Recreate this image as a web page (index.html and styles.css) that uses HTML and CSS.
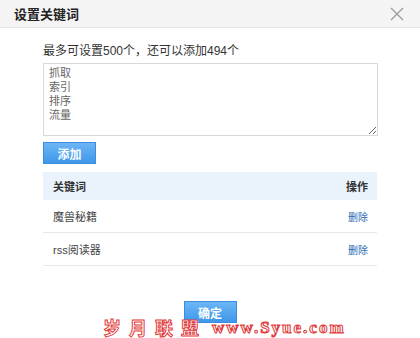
FILE: index.html
```html
<!DOCTYPE html>
<html>
<head>
<meta charset="utf-8">
<link rel="stylesheet" href="styles.css">
</head>
<body>
<div class="dialog">
  <div class="header">
    <span class="title">设置关键词</span>
    <svg class="close" width="14" height="14" viewBox="0 0 14 14"><path d="M1 1L13 13M13 1L1 13" stroke="#9a9a9a" stroke-width="1.3" fill="none"/></svg>
  </div>
  <div class="body">
    <div class="hint">最多可设置500个，还可以添加494个</div>
    <textarea class="kw">抓取
索引
排序
流量</textarea>
    <button class="btn add">添加</button>
    <div class="table">
      <div class="row head"><span>关键词</span><span>操作</span></div>
      <div class="row"><span>魔兽秘籍</span><a class="del">删除</a></div>
      <div class="row"><span>rss阅读器</span><a class="del">删除</a></div>
    </div>
  </div>
  <div class="footer">
    <button class="btn ok">确定</button>
  </div>
  <div class="watermark"><span class="wm-cn">岁月联盟</span><span class="wm-en">www.Syue.com</span></div>
</div>
</body>
</html>
```

FILE: styles.css
```css
* { box-sizing: border-box; }
html, body { margin: 0; padding: 0; background: #fff; }
body { font-family: "Liberation Sans", "Noto Sans CJK SC", sans-serif; font-size: 12px; color: #333; width: 420px; height: 338px; overflow: hidden; }
.dialog { position: relative; width: 420px; height: 338px; }
.header { height: 28px; background: #f4f4f4; border-bottom: 1px solid #e6e6e6; display: flex; align-items: center; justify-content: space-between; padding: 0 16px 0 14px; }
.title { font-size: 13px; font-weight: bold; color: #222; }
.close { display: block; }
.body { padding: 15px 42px 0 43px; }
.hint { font-size: 12px; color: #333; line-height: 16px; }
.kw { display: block; width: 335px; height: 73px; margin-top: 4px; border: 1px solid #d9d9d9; padding: 2px 5px; font-family: "Liberation Sans", "Noto Sans CJK SC", sans-serif; font-size: 11px; line-height: 14px; color: #666; resize: both; }
.btn { border: 1px solid #3b8de0; background: linear-gradient(#6cb6f5, #3f97ea); color: #fff; font-size: 12px; font-weight: bold; font-family: "Liberation Sans", "Noto Sans CJK SC", sans-serif; width: 53px; height: 22px; padding: 0; }
.add { display: block; margin-top: 6px; }
.table { margin-top: 8px; width: 334px; }
.row { height: 33px; display: flex; align-items: center; justify-content: space-between; padding: 0 9px 0 10px; border-bottom: 1px solid #e8e8e8; font-size: 11px; color: #444; }
.row.head { height: 28px; background: #eaf3fc; border-bottom: none; font-weight: bold; color: #333; }
.del { color: #2a6cb4; font-size: 10px; }
.footer { display: flex; justify-content: center; margin-top: 35px; }
.watermark { position: absolute; left: 103px; top: 317px; display: flex; align-items: center; gap: 5px; color: #fff; -webkit-text-stroke: 1px #e03a3a; font-weight: bold; line-height: 21px; }
.wm-cn { font-size: 18px; font-family: "Noto Sans CJK SC", sans-serif; letter-spacing: 8px; }
.wm-en { font-size: 17px; font-family: "Liberation Serif", serif; letter-spacing: 2px; }
```
